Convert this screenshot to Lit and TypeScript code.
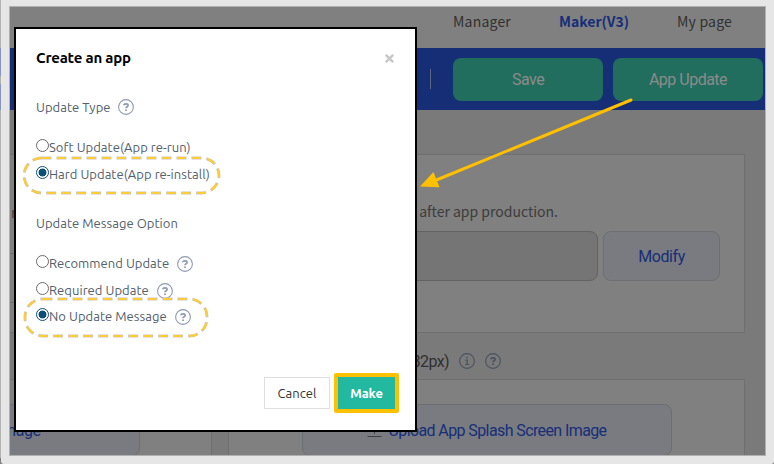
import { LitElement, html, svg, css } from "lit";
import { customElement, property } from "lit/decorators.js";

@customElement("hint-icon")
class HintIcon extends LitElement {
  @property() kind = "help";
  static styles = css`
    :host { display: block; width: 16px; height: 16px; flex: none; color: #8e9ab3; }
    svg { display: block; }
  `;
  render() {
    const mark = this.kind === "info"
      ? svg`<path d="M6.3 7.2H8.2V11.2M6 11.5H10.2" stroke-width="1.2"/><path d="M7.3 4.6H8.7" stroke-width="1.5"/>`
      : svg`<path d="M5.9 6.3C6 4.3 10.1 4.2 10.1 6.4C10.1 7.7 8 7.7 8 9.3" stroke-width="1.7"/><path d="M7.1 11.3H8.9" stroke-width="1.6"/>`;
    return html`<svg width="16" height="16" viewBox="0 0 16 16" fill="none" stroke="currentColor">
      <circle cx="8" cy="8" r="7.4" stroke-width="1.1"/>${mark}</svg>`;
  }
}

@customElement("radio-row")
class RadioRow extends LitElement {
  @property() label = "";
  @property({ type: Boolean }) checked = false;
  @property({ type: Boolean }) help = false;
  static styles = css`
    :host { display: flex; align-items: center; height: 20px; }
    .dot { box-sizing: border-box; width: 13px; height: 13px; border: 1px solid #6b6b6b; border-radius: 50%; margin-bottom: 4px; flex: none; }
    .on { border-color: #0b4f78; background: radial-gradient(circle, #0b4f78 3.6px, #fff 4.3px); }
    .label { white-space: nowrap; }
    hint-icon { margin-left: 8px; margin-top: 1px; }
  `;
  render() {
    return html`<span class="dot ${this.checked ? "on" : ""}"></span>
      <span class="label">${this.label}</span>
      ${this.help ? html`<hint-icon></hint-icon>` : ""}`;
  }
}

@customElement("update-dialog")
class UpdateDialog extends LitElement {
  static styles = css`
    :host { display: flex; flex-direction: column; box-sizing: border-box; width: 403px; height: 405px; border: 2px solid #000; background: #fff; padding: 19px 16px 20px 20px;
      font: 13px/20px Ubuntu, "Noto Sans", sans-serif; color: #52606d; letter-spacing: 0.04px; }
    .head { display: flex; justify-content: space-between; align-items: center; height: 20px; padding-right: 5px; }
    .title { font-size: 15px; font-weight: 700; color: #000; letter-spacing: -0.2px; }
    .group { display: flex; align-items: center; gap: 7px; height: 20px; }
    .first { margin-top: 29px; }
    .second { margin-top: 29px; }
    .soft { margin-top: 20px; }
    .hard { margin-top: 7px; }
    .rec { margin-top: 20px; }
    .req { margin-top: 7px; }
    .none { margin-top: 6px; }
    .actions { display: flex; justify-content: flex-end; align-items: center; gap: 4px; margin-top: auto; margin-bottom: -3px; }
    .btn { box-sizing: border-box; display: flex; align-items: center; justify-content: center; }
    .cancel { width: 66px; height: 32px; border: 1px solid #dfdfdf; color: #333; }
    .make { width: 65px; height: 40px; border: 4px solid #ffc000; border-radius: 2px; background: #23b9a0; color: #fff; font-weight: 600; letter-spacing: -0.1px; }
  `;
  render() {
    return html`
      <div class="head"><span class="title">Create an app</span>
        <svg width="9" height="9" viewBox="0 0 9 9" stroke="#c8c8c8" stroke-width="2.4"><path d="M.8.8L8.2 8.2M8.2.8L.8 8.2"/></svg></div>
      <div class="group first"><span>Update Type</span><hint-icon></hint-icon></div>
      <radio-row class="soft" label="Soft Update(App re-run)"></radio-row>
      <radio-row class="hard" label="Hard Update(App re-install)" checked></radio-row>
      <div class="group second">Update Message Option</div>
      <radio-row class="rec" label="Recommend Update" help></radio-row>
      <radio-row class="req" label="Required Update" help></radio-row>
      <radio-row class="none" label="No Update Message" help checked></radio-row>
      <div class="actions"><span class="btn cancel">Cancel</span><span class="btn make">Make</span></div>`;
  }
}

@customElement("app-root")
class AppRoot extends LitElement {
  static styles = css`
    :host { display: block; position: relative; box-sizing: border-box; width: 774px; height: 464px; overflow: hidden; padding-left: 1px;
      background: linear-gradient(#b3b3b3 48px, #8794bf 48px 76px, #b3b3b3 76px 84px, #8794bf 84px 110px, #b3b3b3 110px 458px, #808080 458px); }
    .frame { box-sizing: border-box; height: 464px; padding: 6px 8px 8px; background: #e6e6e6; border-radius: 0 0 3px 3px; }
    .page { box-sizing: border-box; height: 450px; border: 1px solid #b0b0b0; background: #7a7a7a; overflow: hidden; font-family: Roboto, sans-serif; font-size: 16px; letter-spacing: -0.5px; color: #303030; }
    .nav { box-sizing: border-box; height: 41px; padding: 0 33px 12px 0; display: flex; justify-content: flex-end; align-items: center; background: #808080; font: 14px/20px "Noto Sans CJK KR", sans-serif; letter-spacing: 0.2px; }
    .nav span { margin-left: 48px; position: relative; top: -1px; }
    .nav .current { color: #172e78; font-weight: 700; letter-spacing: 0; }
    .bar { box-sizing: border-box; height: 62px; background: #162e75; display: flex; justify-content: flex-end; align-items: center; gap: 10px; padding-right: 2px; }
    .rule { width: 1px; height: 20px; background: #5a6480; margin-right: 12px; }
    .big { width: 150px; height: 43px; margin-top: 1px; border-radius: 8px; background: #226e5e; color: #8b8b8b; display: flex; align-items: center; justify-content: center; }
    .columns { display: grid; grid-template-columns: 202px 517px; column-gap: 16px; padding-top: 44px; }
    .card { box-sizing: border-box; background: #808080; border: 1px solid #6f6f6f; }
    .column > .card { height: 179px; }
    .left .card { border-left: 0; }
    .left .card:first-child { padding-top: 47px; }
    .right .card { padding: 46px 24px 0; }
    .note { font: 14px/20px "Noto Sans CJK KR", sans-serif; letter-spacing: 0; text-align: right; padding-right: 162px; color: #3c3c3c; white-space: nowrap; }
    .left .note { text-align: left; padding: 0; margin-left: 1px; }
    .form { display: flex; gap: 5px; justify-content: flex-end; margin-top: 10px; }
    .field { box-sizing: border-box; width: 345px; height: 50px; border: 1px solid #636363; border-radius: 8px; background: #757575; }
    .action { box-sizing: border-box; border: 1px solid #6d6e72; border-radius: 8px; background: #797b80; color: #172e78; display: flex; align-items: center; justify-content: center; }
    .modify { width: 117px; height: 50px; letter-spacing: -0.4px; }
    .leftline { height: 48px; margin-top: 31px; border-top: 1px solid #6f6f6f; border-bottom: 1px solid #6f6f6f; }
    .caption { height: 46px; display: flex; align-items: center; justify-content: flex-end; gap: 10px; padding: 10px 244px 0 0; box-sizing: border-box; }
    .caption span { letter-spacing: -0.6px; }
    .caption hint-icon { color: #4b5160; }
    .column > .images { height: 90px; padding-top: 24px; }
    .left .action { width: 130px; height: 52px; border-left: 0; border-radius: 0 8px 8px 0; justify-content: flex-start; }
    .left .action span { margin-left: -8px; letter-spacing: -0.4px; }
    .right .images { padding-left: 73px; }
    .right .images .action { width: 370px; height: 52px; gap: 6px; letter-spacing: -0.6px; }
    update-dialog { position: absolute; left: 14px; top: 27px; }
    .marks { position: absolute; left: 0; top: 0; }
  `;
  render() {
    return html`
      <div class="frame"><div class="page">
        <div class="nav"><span>Manager</span><span class="current">Maker(V3)</span><span>My page</span></div>
        <div class="bar"><span class="rule"></span><span class="big">Save</span><span class="big">App Update</span></div>
        <div class="columns">
          <div class="column left">
            <div class="card"><div class="note">n.</div><div class="leftline"></div></div>
            <div class="caption"></div>
            <div class="card images"><div class="action"><span>mage</span></div></div>
          </div>
          <div class="column right">
            <div class="card">
              <div class="note">after app production.</div>
              <div class="form"><span class="field"></span><span class="action modify">Modify</span></div>
            </div>
            <div class="caption"><span>(1242 x 2732px)</span><hint-icon kind="info"></hint-icon><hint-icon></hint-icon></div>
            <div class="card images"><div class="action">
              <svg width="15" height="16" viewBox="0 0 15 16" fill="none" stroke="#3c4048"><path d="M7.5 12V1.5M3.5 5.5L7.5 1.5L11.5 5.5M.5 14.5H14.5"/></svg>
              <span>Upload App Splash Screen Image</span></div></div>
          </div>
        </div>
      </div></div>
      <update-dialog></update-dialog>
      <svg class="marks" width="774" height="464" fill="none">
        <path d="M631 100L434 181" stroke="#ffc000" stroke-width="3" stroke-linecap="round"/>
        <path d="M420 186.5L433.5 172L439.5 187.2Z" fill="#ffc000"/>
        <g stroke-width="2.8">
          <rect x="24" y="158" width="195" height="35" rx="17.5" stroke="#c9c5b8" stroke-dasharray="10 5"/>
          <rect x="24" y="158" width="195" height="35" rx="17.5" stroke="#ffcd33" stroke-width="2.2" stroke-dasharray="8 7" stroke-dashoffset="-1"/>
          <rect x="25" y="299" width="182" height="37" rx="17.5" stroke="#c9c5b8" stroke-dasharray="10 5"/>
          <rect x="25" y="299" width="182" height="37" rx="17.5" stroke="#ffcd33" stroke-width="2.2" stroke-dasharray="8 7" stroke-dashoffset="-1"/>
        </g>
      </svg>`;
  }
}
